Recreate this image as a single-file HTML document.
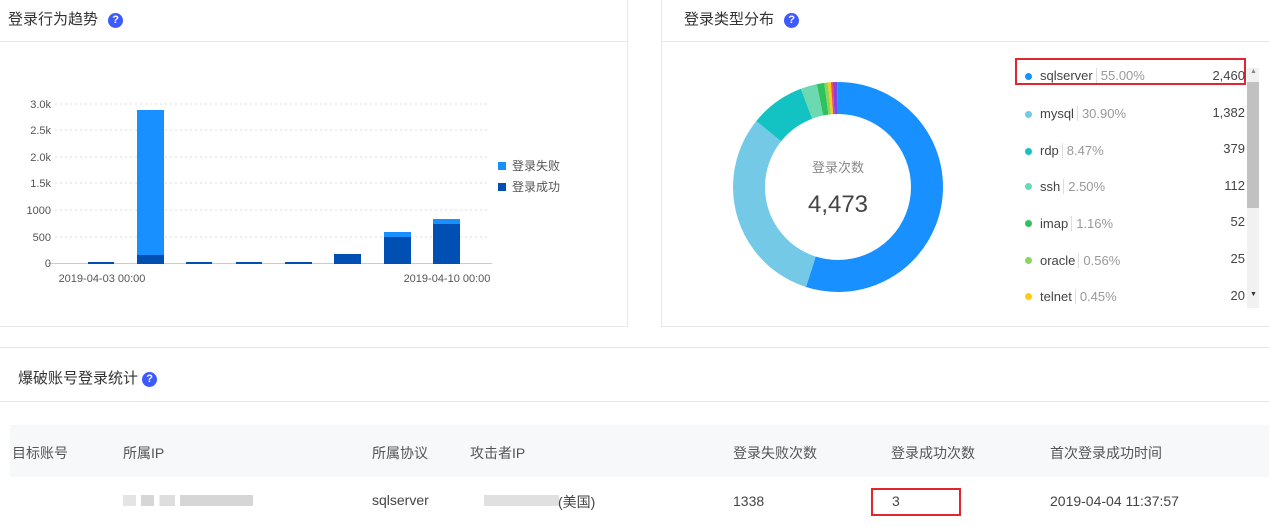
<!DOCTYPE html>
<html><head><meta charset="utf-8"><style>
*{margin:0;padding:0;box-sizing:border-box}
body{width:1269px;height:527px;background:#fff;font-family:"Liberation Sans","Noto Sans CJK SC",sans-serif;position:relative;overflow:hidden;color:#333}
.abs{position:absolute}
.q{display:inline-block;width:15px;height:15px;border-radius:50%;background:#3d5afe;color:#fff;font-size:11px;line-height:15px;text-align:center;font-weight:bold}
.t{font-size:15px;color:#333;white-space:nowrap}
.th{font-size:14px;color:#555;white-space:nowrap}
.lg{font-size:13px;color:#444;white-space:nowrap}
.lg .p{color:#999;border-left:1px solid #ddd;padding-left:4px;margin-left:3px}
.num{font-size:13px;color:#444;text-align:right;width:60px}
.dot{width:7px;height:7px;border-radius:50%}
</style></head><body>
<!-- left panel -->
<div class="abs" style="left:-2px;top:-2px;width:630px;height:329px;border:1px solid #e8e8e8"></div>
<div class="abs" style="left:0;top:41px;width:628px;height:1px;background:#e8e8e8"></div>
<div class="abs t" style="left:8px;top:8px">登录行为趋势 <span class="q" style="margin-left:6px;vertical-align:1px">?</span></div>
<svg class="abs" style="left:0;top:90px" width="600" height="200" font-family="Liberation Sans" font-size="11" fill="#555">
<g stroke="#ddd" stroke-dasharray="2,3">
<line x1="55" x2="490" y1="14" y2="14"/><line x1="55" x2="490" y1="40" y2="40"/><line x1="55" x2="490" y1="67" y2="67"/><line x1="55" x2="490" y1="93" y2="93"/><line x1="55" x2="490" y1="120" y2="120"/><line x1="55" x2="490" y1="147" y2="147"/></g>
<line x1="48" x2="492" y1="173.5" y2="173.5" stroke="#ccc"/>
<g text-anchor="end"><text x="51" y="18">3.0k</text><text x="51" y="44">2.5k</text><text x="51" y="71">2.0k</text><text x="51" y="97">1.5k</text><text x="51" y="124">1000</text><text x="51" y="151">500</text><text x="51" y="177">0</text></g>
<text x="102" y="192" text-anchor="middle">2019-04-03 00:00</text><text x="447" y="192" text-anchor="middle">2019-04-10 00:00</text>
<g fill="#1890ff"><rect x="137" y="20" width="27" height="145"/><rect x="384" y="142" width="27" height="5"/><rect x="433" y="129" width="27" height="5"/></g>
<g fill="#0050b3"><rect x="88" y="172" width="26" height="2"/><rect x="137" y="165" width="27" height="9"/><rect x="186" y="172" width="26" height="2"/><rect x="236" y="172" width="26" height="2"/><rect x="285" y="172" width="27" height="2"/><rect x="334" y="164" width="27" height="10"/><rect x="384" y="147" width="27" height="27"/><rect x="433" y="134" width="27" height="40"/></g>
<rect x="498" y="72" width="8" height="8" fill="#1890ff"/><text x="512" y="80" font-family="Liberation Sans,Noto Sans CJK SC" font-size="12">登录失败</text>
<rect x="498" y="93" width="8" height="8" fill="#0050b3"/><text x="512" y="101" font-family="Liberation Sans,Noto Sans CJK SC" font-size="12">登录成功</text>
</svg>
<!-- right panel -->
<div class="abs" style="left:661px;top:-2px;width:612px;height:329px;border:1px solid #e8e8e8"></div>
<div class="abs" style="left:662px;top:41px;width:607px;height:1px;background:#e8e8e8"></div>
<div class="abs t" style="left:684px;top:8px">登录类型分布 <span class="q" style="margin-left:6px;vertical-align:1px">?</span></div>
<svg class="abs" style="left:718px;top:67px" width="240" height="240">
<g transform="rotate(-90 120 120)" fill="none" stroke-width="32">
<circle cx="120" cy="120" r="89" pathLength="100" stroke="#1890ff" stroke-dasharray="55 45" stroke-dashoffset="0"/>
<circle cx="120" cy="120" r="89" pathLength="100" stroke="#73c9e6" stroke-dasharray="30.9 69.1" stroke-dashoffset="-55"/>
<circle cx="120" cy="120" r="89" pathLength="100" stroke="#13c2c2" stroke-dasharray="8.47 91.53" stroke-dashoffset="-85.9"/>
<circle cx="120" cy="120" r="89" pathLength="100" stroke="#6dd9b0" stroke-dasharray="2.5 97.5" stroke-dashoffset="-94.37"/>
<circle cx="120" cy="120" r="89" pathLength="100" stroke="#2fc25b" stroke-dasharray="1.16 98.84" stroke-dashoffset="-96.87"/>
<circle cx="120" cy="120" r="89" pathLength="100" stroke="#8bd45e" stroke-dasharray="0.56 99.44" stroke-dashoffset="-98.03"/>
<circle cx="120" cy="120" r="89" pathLength="100" stroke="#facc14" stroke-dasharray="0.45 99.55" stroke-dashoffset="-98.59"/>
<circle cx="120" cy="120" r="89" pathLength="100" stroke="#f04864" stroke-dasharray="0.3 99.7" stroke-dashoffset="-99.04"/>
<circle cx="120" cy="120" r="89" pathLength="100" stroke="#8543e0" stroke-dasharray="0.66 99.34" stroke-dashoffset="-99.34"/>
</g>
<text x="120" y="105" text-anchor="middle" font-family="Liberation Sans,Noto Sans CJK SC" font-size="13" fill="#888">登录次数</text>
<text x="120" y="145" text-anchor="middle" font-family="Liberation Sans" font-size="24" fill="#444">4,473</text>
</svg>
<div class="abs" style="left:1015px;top:58px;width:231px;height:27px;border:2px solid #e0272f"></div>
<div class="abs" style="left:1247px;top:68px;width:12px;height:240px;background:#f1f1f1"></div>
<div class="abs" style="left:1247px;top:82px;width:12px;height:126px;background:#c1c1c1"></div>
<div class="abs" style="left:1250px;top:68px;font-size:7px;color:#888">▲</div>
<div class="abs" style="left:1250px;top:291px;font-size:7px;color:#333">▼</div>
<div class="abs dot" style="left:1025px;top:73px;background:#1890ff"></div><div class="abs lg" style="left:1040px;top:68px">sqlserver<span class="p">55.00%</span></div><div class="abs num" style="left:1185px;top:68px">2,460</div>
<div class="abs dot" style="left:1025px;top:111px;background:#73c9e6"></div><div class="abs lg" style="left:1040px;top:106px">mysql<span class="p">30.90%</span></div><div class="abs num" style="left:1185px;top:105px">1,382</div>
<div class="abs dot" style="left:1025px;top:148px;background:#13c2c2"></div><div class="abs lg" style="left:1040px;top:143px">rdp<span class="p">8.47%</span></div><div class="abs num" style="left:1185px;top:141px">379</div>
<div class="abs dot" style="left:1025px;top:183px;background:#6dd9b0"></div><div class="abs lg" style="left:1040px;top:179px">ssh<span class="p">2.50%</span></div><div class="abs num" style="left:1185px;top:178px">112</div>
<div class="abs dot" style="left:1025px;top:220px;background:#2fc25b"></div><div class="abs lg" style="left:1040px;top:216px">imap<span class="p">1.16%</span></div><div class="abs num" style="left:1185px;top:214px">52</div>
<div class="abs dot" style="left:1025px;top:257px;background:#8bd45e"></div><div class="abs lg" style="left:1040px;top:253px">oracle<span class="p">0.56%</span></div><div class="abs num" style="left:1185px;top:251px">25</div>
<div class="abs dot" style="left:1025px;top:293px;background:#facc14"></div><div class="abs lg" style="left:1040px;top:289px">telnet<span class="p">0.45%</span></div><div class="abs num" style="left:1185px;top:288px">20</div>
<!-- bottom -->
<div class="abs" style="left:0;top:347px;width:1269px;height:1px;background:#e8e8e8"></div>
<div class="abs" style="left:0;top:401px;width:1269px;height:1px;background:#e8e8e8"></div>
<div class="abs t" style="left:18px;top:367px">爆破账号登录统计 <span class="q" style="vertical-align:1px">?</span></div>
<div class="abs" style="left:10px;top:425px;width:1259px;height:52px;background:#f7f8fa"></div>
<div class="abs th" style="left:12px;top:443px">目标账号</div>
<div class="abs th" style="left:123px;top:443px">所属IP</div>
<div class="abs th" style="left:372px;top:443px">所属协议</div>
<div class="abs th" style="left:470px;top:443px">攻击者IP</div>
<div class="abs th" style="left:733px;top:443px">登录失败次数</div>
<div class="abs th" style="left:891px;top:443px">登录成功次数</div>
<div class="abs th" style="left:1050px;top:443px">首次登录成功时间</div>
<div class="abs" style="left:123px;top:495px;width:130px;height:11px;background:linear-gradient(90deg,#ddd 0 10%,#fff 10% 14%,#ccc 14% 24%,#fff 24% 28%,#d5d5d5 28% 40%,#fff 40% 44%,#ccc 44% 100%);opacity:.8"></div>
<div class="abs th" style="left:372px;top:492px;color:#444">sqlserver</div>
<div class="abs" style="left:484px;top:495px;width:75px;height:11px;background:#d8d8d8;opacity:.8"></div>
<div class="abs th" style="left:558px;top:492px;color:#444">(美国)</div>
<div class="abs th" style="left:733px;top:493px;color:#444">1338</div>
<div class="abs" style="left:871px;top:488px;width:90px;height:28px;border:2px solid #e0272f"></div>
<div class="abs th" style="left:892px;top:493px;color:#444">3</div>
<div class="abs th" style="left:1050px;top:493px;color:#444">2019-04-04 11:37:57</div>
</body></html>
